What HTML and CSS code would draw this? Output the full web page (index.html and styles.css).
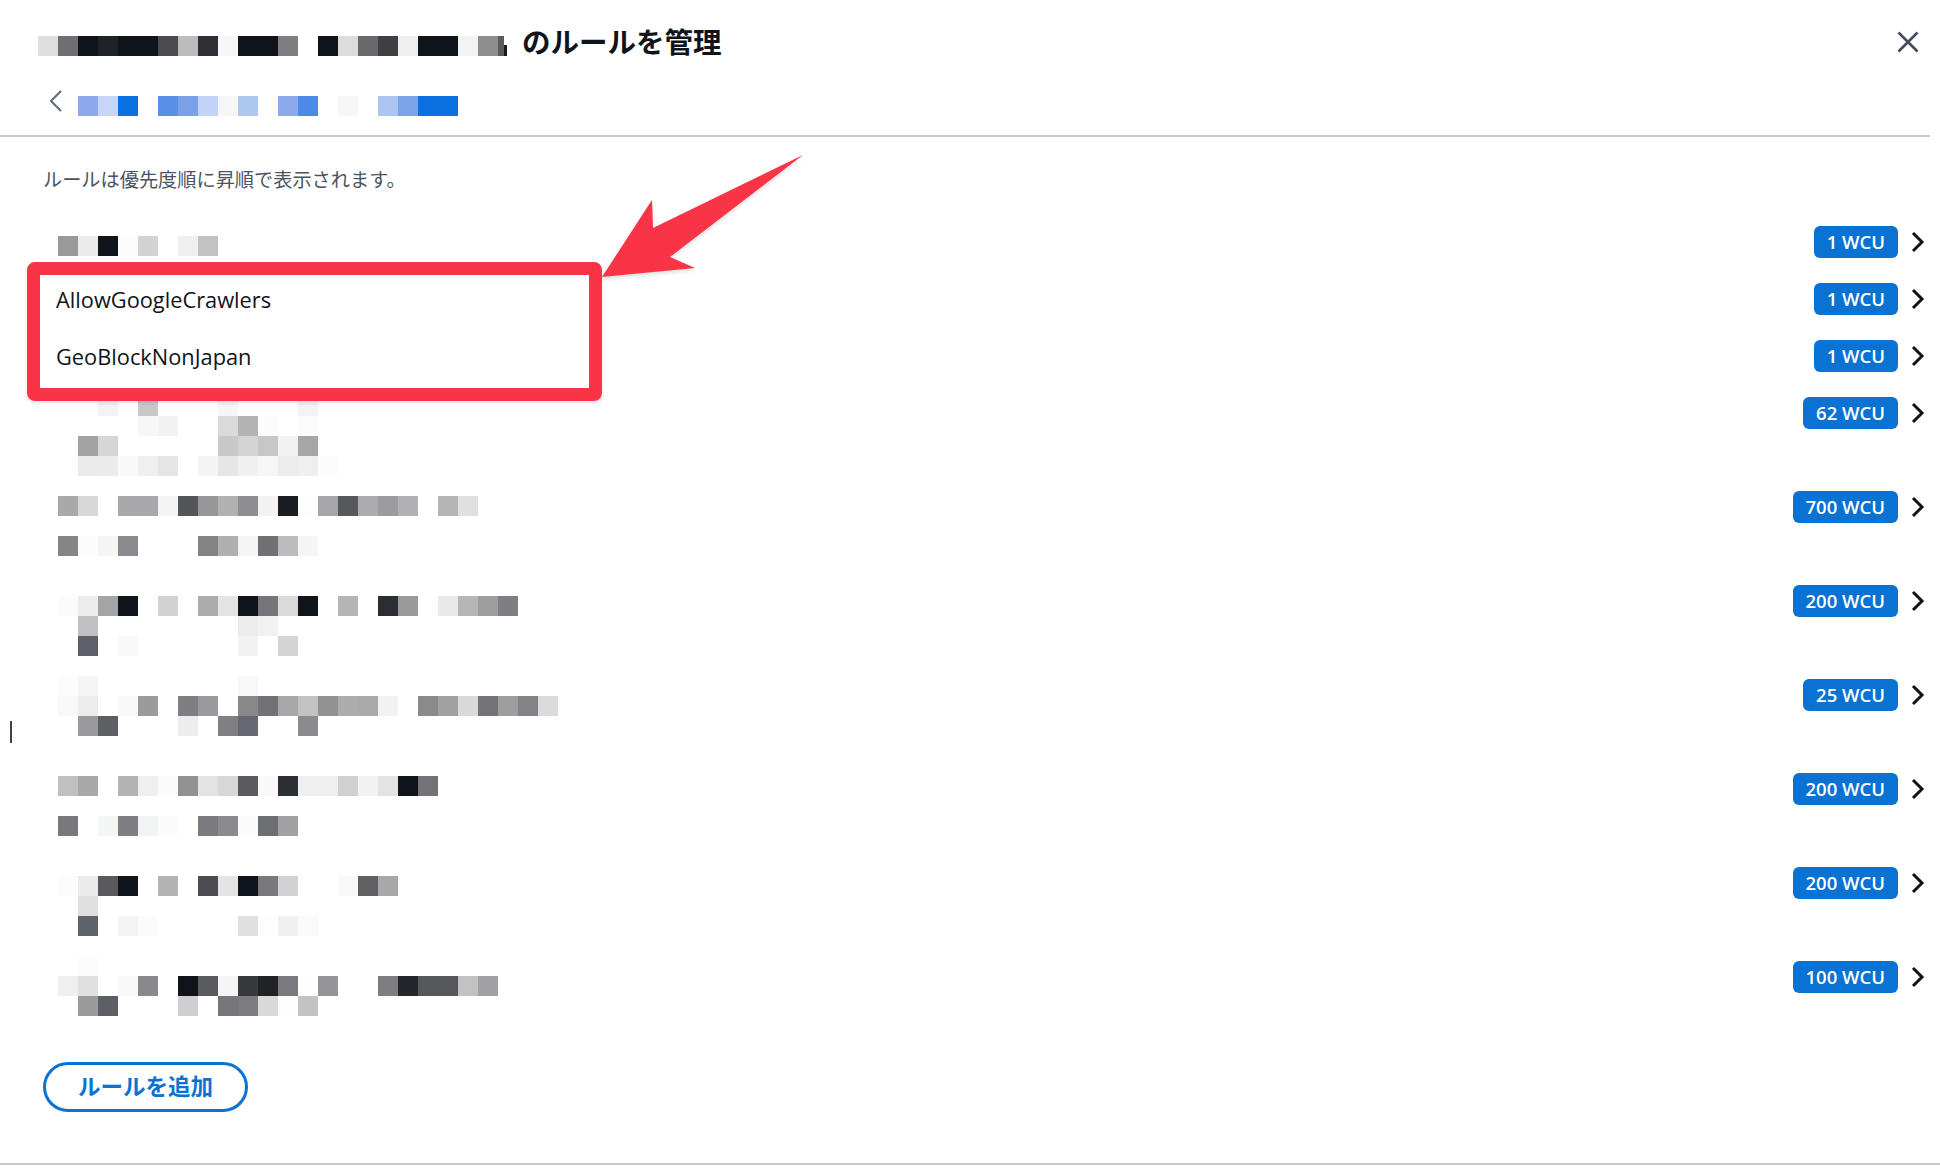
FILE: index.html
```html
<!DOCTYPE html>
<html lang="ja">
<head>
  <meta charset="UTF-8" />
  <meta name="viewport" content="width=device-width,initial-scale=1.0"/>
  <title>ルールを管理</title>
  <link rel="stylesheet" href="styles.css">
</head>
<body>
  <div class="page">
    <header class="modal-header">
      <div class="title-row">
        <h2 class="title">
          <span class="mosaic" data-rows="dedede 6e6f72 0f141b 1f2226 0f141b 0f141b 4b4c4f bcbcbc 2c2f33 f7f7f7 0f141b 0f141b 7f7f82 . 0f141b dcdcdc 67696d 3f4044 efefef 0f141b 0f141b f3f3f3 8e8e90"></span>
          <span class="sliver"></span>
          <span class="title-text">のルールを管理</span>
        </h2>
        <button class="close" type="button" aria-label="閉じる">
          <svg width="24" height="24" viewBox="0 0 24 24"><path d="M2.5 2.5 L21.5 21.5 M21.5 2.5 L2.5 21.5"/></svg>
        </button>
      </div>
      <nav class="crumbs">
        <svg class="crumb-back" width="14" height="22" viewBox="0 0 14 22"><polyline points="12,1 2,11 12,21"/></svg>
        <span class="mosaic" data-rows="8fa9ef c8d6f5 0a6fe0 . 5b8ee5 7aa0e8 c1d3f6 f5f6f8 aec8f2 . 8caaec 4d89e6 . f7f7f8 . acc6f3 7ba3ea 0a6fe0 0a6fe0"></span>
      </nav>
    </header>

    <section class="modal-body">
      <p class="hint">ルールは優先度順に昇順で表示されます。</p>

      <ul class="rules">
        <li class="rule">
          <div class="rule-main">
            <div class="mosaic drop-23" data-rows="9a9a9b ebebeb 10151c fcfcfc d3d3d3 . efefef c2c2c2"></div>
          </div>
          <div class="rule-side"><span class="badge">1 WCU</span><svg class="go" width="16" height="24" viewBox="0 0 16 24"><polyline points="3,3 12,12 3,21"/></svg></div>
        </li>
        <li class="rule">
          <div class="rule-main"><span class="rule-name">AllowGoogleCrawlers</span></div>
          <div class="rule-side"><span class="badge">1 WCU</span><svg class="go" width="16" height="24" viewBox="0 0 16 24"><polyline points="3,3 12,12 3,21"/></svg></div>
        </li>
        <li class="rule">
          <div class="rule-main"><span class="rule-name">GeoBlockNonJapan</span></div>
          <div class="rule-side"><span class="badge">1 WCU</span><svg class="go" width="16" height="24" viewBox="0 0 16 24"><polyline points="3,3 12,12 3,21"/></svg></div>
        </li>
        <li class="rule tall">
          <div class="rule-main">
            <div class="mosaic drop-12" data-rows=". . f3f3f3 . c8c8ca . . . f5f5f5 . . . f3f3f3 | . . . . f7f7f7 f2f2f2 . . dadada b3b3b4 fcfcfc . fcfcfc | . a3a3a5 d5d5d7 . . . . . c8c8ca d3d4d6 c7c7c9 f2f2f2 a6a6a8 | . eaeaea ebebeb f9f9f9 efefef e5e5e5 . f4f4f4 e6e6e6 f0f0f0 f6f6f6 ececec efefef fcfcfc"></div>
          </div>
          <div class="rule-side"><span class="badge">62 WCU</span><svg class="go" width="16" height="24" viewBox="0 0 16 24"><polyline points="3,3 12,12 3,21"/></svg></div>
        </li>
        <li class="rule tall">
          <div class="rule-main">
            <div class="mosaic drop-18" data-rows="a9a9aa d8d8d8 . a9a9ab a9a9ab f4f4f4 545559 97979a b1b1b2 8e8e90 f2f2f2 1a1d22 fdfdfd a6a6a8 57585c acacae 9c9c9e b1b1b3 . b4b4b5 e0e0e0 | . | 858587 fcfcfc f5f5f5 8a8a8e . . . 838386 b0b0b1 f5f5f5 707074 bcbcbe f5f5f5"></div>
          </div>
          <div class="rule-side"><span class="badge">700 WCU</span><svg class="go" width="16" height="24" viewBox="0 0 16 24"><polyline points="3,3 12,12 3,21"/></svg></div>
        </li>
        <li class="rule tall">
          <div class="rule-main">
            <div class="mosaic drop-24" data-rows="fbfbfb ececec a4a4a6 10151c . d2d2d4 . acacae e4e4e4 0f141b 76767a dadada 10151c . b5b5b6 . 2a2d31 9a9a9c . e9e9e9 b6b6b7 9e9ea0 7f7f83 | . c0c0c2 . . . . . . . ececec f1f1f1 | . 5e6068 . f9f9f9 . . . . . f1f1f1 . d4d4d6"></div>
          </div>
          <div class="rule-side"><span class="badge">200 WCU</span><svg class="go" width="16" height="24" viewBox="0 0 16 24"><polyline points="3,3 12,12 3,21"/></svg></div>
        </li>
        <li class="rule tall">
          <div class="rule-main">
            <div class="mosaic drop-10" data-rows="fcfcfc f5f5f5 . . . . . . . f8f8f8 | f8f8f8 ececec . f9f9f9 9b9b9d . 7f7f83 9a9b9f . 88888b 727276 a8a8aa c2c2c3 929295 acacae aaaaac f2f2f2 . 8a8a8d a1a1a3 d9d9d9 737377 9d9d9f 838387 dbdbdb | . 9a9a9d 5d5f65 . . . ededed . 808084 666971 . . 8b8b8f"></div>
          </div>
          <div class="rule-side"><span class="badge">25 WCU</span><svg class="go" width="16" height="24" viewBox="0 0 16 24"><polyline points="3,3 12,12 3,21"/></svg></div>
        </li>
        <li class="rule tall">
          <div class="rule-main">
            <div class="mosaic drop-16" data-rows="c0c0c1 a9a9ab . b3b3b4 efefef fbfbfb 929295 e3e3e3 d6d7d8 5a5b5f f9f9f9 2b2e33 efefef efefef d0d0d2 f2f2f2 e3e3e3 0f141b 737377 | . | 79797d . f4f5f5 7f7f83 f2f3f3 fbfbfb . 7a7a7e 8b8b8f fbfbfb 6d6e73 a2a2a4"></div>
          </div>
          <div class="rule-side"><span class="badge">200 WCU</span><svg class="go" width="16" height="24" viewBox="0 0 16 24"><polyline points="3,3 12,12 3,21"/></svg></div>
        </li>
        <li class="rule tall">
          <div class="rule-main">
            <div class="mosaic drop-22" data-rows="fcfcfc ebebeb 5a5a5d 10151c . b3b3b4 . 4c4d53 e4e4e4 0f141b 79797d d1d2d3 . . f9f9f9 606063 a8a8aa | . e0e0e0 | . 5e626b . f3f4f4 fbfbfb . . . . e0e0e0 fdfdfd f0f0f0 fafafa"></div>
          </div>
          <div class="rule-side"><span class="badge">200 WCU</span><svg class="go" width="16" height="24" viewBox="0 0 16 24"><polyline points="3,3 12,12 3,21"/></svg></div>
        </li>
        <li class="rule tall">
          <div class="rule-main">
            <div class="mosaic drop-8" data-rows=". fcfcfc | efefef e0e0e0 . f9f9f9 89898d . 0f141b 5a5b5f f5f5f5 38393d 1f2226 7b7b7f fefefe 959597 . . 7e7e82 23262b 56575b 56575b c2c2c3 a1a1a3 | . 9b9b9e 5d5f66 . . . cfcfd1 . 77777b 7c7c80 d9d9da fdfdfd c3c3c5"></div>
          </div>
          <div class="rule-side"><span class="badge">100 WCU</span><svg class="go" width="16" height="24" viewBox="0 0 16 24"><polyline points="3,3 12,12 3,21"/></svg></div>
        </li>
      </ul>

      <button class="add-btn" type="button">ルールを追加</button>
    </section>
  </div>

  <!-- callout drawn over the list -->
  <div class="callout"></div>
  <svg class="callout-arrow" width="230" height="150" viewBox="0 0 230 150">
    <polygon points="213,15 63,88 62,60 12,137 105,128 80,117"/>
  </svg>
  <span class="caret"></span>

  <script>
    // build the pixelated blocks from the colour lists
    document.querySelectorAll('.mosaic').forEach(function (m) {
      m.dataset.rows.split('|').forEach(function (row) {
        var line = document.createElement('span');
        line.className = 'mosaic-line';
        row.trim().split(/\s+/).forEach(function (c) {
          var cell = document.createElement('span');
          cell.className = 'cell';
          if (c !== '.') cell.style.background = '#' + c;
          line.appendChild(cell);
        });
        m.appendChild(line);
      });
    });
  </script>
</body>
</html>
```

FILE: styles.css
```css
html, body {
  margin: 0;
  background: #fff;
  font-family: 'Open Sans', 'Noto Sans CJK JP', sans-serif;
  color: #0f141a;
}
.page {
  width: 1940px;
}

/* header */
.modal-header {
  width: 1930px;
  box-sizing: border-box;
  padding: 26px 10px 19px 38px;
  border-bottom: 2px solid #c6c6cd;
}
.title-row {
  display: flex;
  justify-content: space-between;
  height: 40px;
}
.title {
  display: flex;
  align-items: flex-start;
  margin: 0;
}
.title .mosaic {
  margin-top: 10px;
}
.sliver {
  width: 9px;
  height: 20px;
  margin-top: 10px;
  background: #5a5b5f;
  border-right: 3px solid #16191f;
  box-sizing: border-box;
  clip-path: polygon(0 0, 6px 0, 6px 9px, 100% 9px, 100% 100%, 0 100%);
}
.title-text {
  margin-left: 15px;
  font-family: 'Noto Sans CJK JP', sans-serif;
  font-size: 28.5px;
  font-weight: 700;
  line-height: 30px;
  color: #0f141a;
}
.close {
  align-self: flex-start;
  margin-top: 4px;
  padding: 0;
  border: none;
  background: none;
  width: 24px;
  height: 24px;
}
.close svg {
  display: block;
  stroke: #414d5c;
  stroke-width: 2.6;
  fill: none;
}
.crumbs {
  display: flex;
  align-items: flex-start;
  margin-top: 24px;
}
.crumb-back {
  margin-left: 11px;
  fill: none;
  stroke: #5f6b7a;
  stroke-width: 2;
}
.crumbs .mosaic {
  margin-left: 15px;
  margin-top: 6px;
}

/* pixelated blocks */
.mosaic {
  display: flex;
  flex-direction: column;
}
.mosaic-line {
  display: flex;
  height: 20px;
}
.cell {
  width: 20px;
  height: 20px;
  flex: none;
}

/* body */
.modal-body {
  padding: 0 14px 51px 43px;
  border-bottom: 2px solid #c6c6cd;
}
.hint {
  margin: 28px 0 20px;
  font-family: 'Noto Sans CJK JP', sans-serif;
  font-size: 19.2px;
  line-height: 28px;
  color: #4b5362;
}
.rules {
  list-style: none;
  margin: 0;
  padding: 0 0 0 13px;
}
.rule {
  display: flex;
  align-items: flex-start;
  height: 57px;
}
.rule.tall {
  height: 94px;
}
.rule-main {
  flex: 1;
}
.rule-main .mosaic {
  margin-left: 2px;
}
.drop-8 { margin-top: 8px; }
.drop-10 { margin-top: 10px; }
.drop-12 { margin-top: 12px; }
.drop-16 { margin-top: 16px; }
.drop-18 { margin-top: 18px; }
.drop-22 { margin-top: 22px; }
.drop-23 { margin-top: 23px; }
.drop-24 { margin-top: 24px; }
.rule-name {
  display: block;
  margin-top: 14px;
  font-size: 21.8px;
  line-height: 32px;
  color: #0f141a;
}
.rule-side {
  display: flex;
  align-items: center;
  gap: 12px;
  margin-top: 13px;
}
.badge {
  height: 32px;
  padding: 0 13px;
  border-radius: 6px;
  background: #0972d3;
  color: #fff;
  font-size: 18.5px;
  font-weight: 600;
  line-height: 32px;
  white-space: nowrap;
}
.go {
  display: block;
  fill: none;
  stroke: #0f141a;
  stroke-width: 3;
}
.add-btn {
  display: inline-flex;
  align-items: center;
  height: 50px;
  margin-top: 20px;
  padding: 0 32px 4px;
  box-sizing: border-box;
  border: 3px solid #0972d3;
  border-radius: 25px;
  background: #fff;
  color: #0972d3;
  font-family: 'Noto Sans CJK JP', sans-serif;
  font-size: 22.5px;
  font-weight: 700;
}

/* red annotation */
.callout {
  position: absolute;
  left: 27px;
  top: 262px;
  width: 575px;
  height: 139px;
  box-sizing: border-box;
  border: 13px solid #f93447;
  border-radius: 8px;
  box-shadow: 0 2px 4px rgba(0, 0, 0, 0.12);
}
.callout-arrow {
  position: absolute;
  left: 590px;
  top: 140px;
  fill: #f93447;
  filter: drop-shadow(0 2px 2px rgba(0, 0, 0, 0.14));
}
.caret {
  position: absolute;
  left: 10px;
  top: 721px;
  width: 2px;
  height: 22px;
  background: #3d4450;
}
```
